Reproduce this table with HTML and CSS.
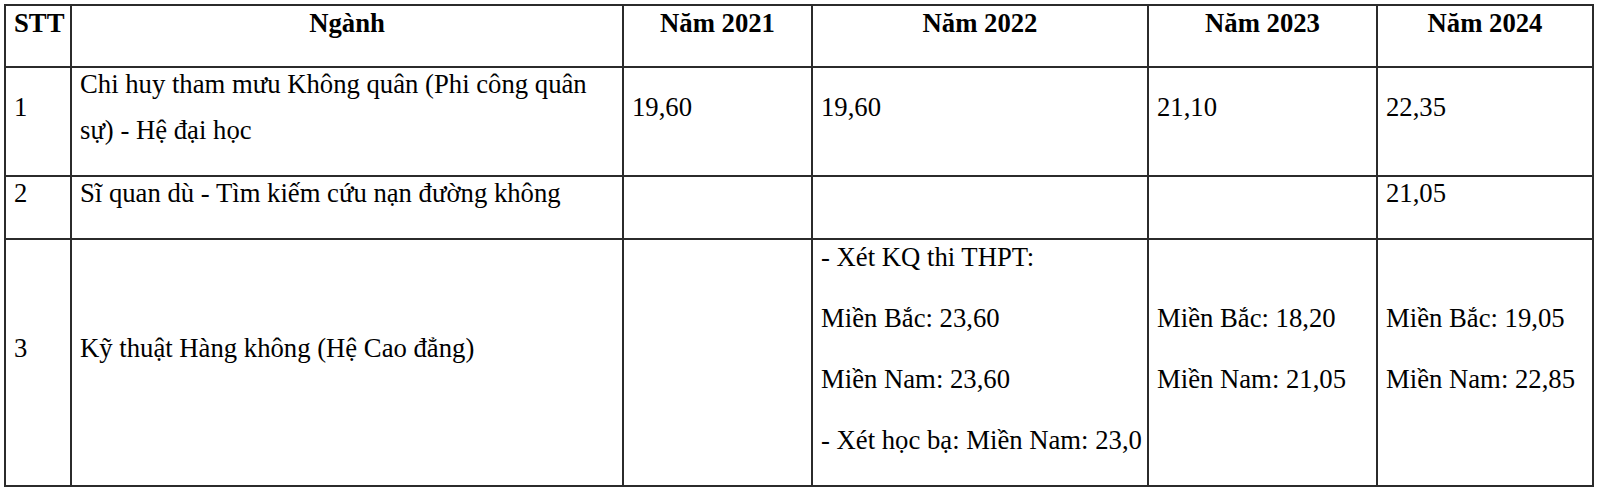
FILE: index.html
```html
<!DOCTYPE html>
<html lang="vi">
<head>
<meta charset="utf-8">
<title>Điểm chuẩn</title>
<link rel="stylesheet" href="styles.css">
</head>
<body>
<table class="scores">
  <colgroup>
    <col class="c-stt">
    <col class="c-name">
    <col class="c-y21">
    <col class="c-y22">
    <col class="c-y23">
    <col class="c-y24">
  </colgroup>
  <thead>
    <tr class="row-head">
      <th><p>STT</p></th>
      <th><p>Ngành</p></th>
      <th><p>Năm 2021</p></th>
      <th><p>Năm 2022</p></th>
      <th><p>Năm 2023</p></th>
      <th><p>Năm 2024</p></th>
    </tr>
  </thead>
  <tbody>
    <tr class="row-1">
      <td><p>1</p></td>
      <td><p>Chi huy tham mưu Không quân (Phi công quân<br>sự) - Hệ đại học</p></td>
      <td><p>19,60</p></td>
      <td><p>19,60</p></td>
      <td><p>21,10</p></td>
      <td><p>22,35</p></td>
    </tr>
    <tr class="row-2">
      <td><p>2</p></td>
      <td><p>Sĩ quan dù - Tìm kiếm cứu nạn đường không</p></td>
      <td></td>
      <td></td>
      <td></td>
      <td><p>21,05</p></td>
    </tr>
    <tr class="row-3">
      <td><p>3</p></td>
      <td><p>Kỹ thuật Hàng không (Hệ Cao đẳng)</p></td>
      <td></td>
      <td>
        <p>- Xét KQ thi THPT:</p>
        <p>Miền Bắc: 23,60</p>
        <p>Miền Nam: 23,60</p>
        <p>- Xét học bạ: Miền Nam: 23,0</p>
      </td>
      <td>
        <p>Miền Bắc: 18,20</p>
        <p>Miền Nam: 21,05</p>
      </td>
      <td>
        <p>Miền Bắc: 19,05</p>
        <p>Miền Nam: 22,85</p>
      </td>
    </tr>
  </tbody>
</table>
</body>
</html>
```

FILE: styles.css
```css
html, body {
  margin: 0;
  padding: 0;
  background: #ffffff;
}

body {
  padding: 4px 0 0 4px;
  font-family: "Liberation Serif", "Times New Roman", serif;
  font-size: 26.7px;
  color: #000000;
}

.scores {
  border-collapse: collapse;
  table-layout: fixed;
  width: 1590px;
  font-family: "Liberation Serif", "Times New Roman", serif;
  font-size: 26.7px;
}

.c-stt { width: 66px; }
.c-name { width: 552px; }
.c-y21 { width: 189px; }
.c-y22 { width: 336px; }
.c-y23 { width: 229px; }
.c-y24 { width: 216px; }

.scores th,
.scores td {
  border: 2px solid #2b2b2b;
  padding: 0 8px;
  vertical-align: middle;
  text-align: left;
  font-weight: normal;
}

.scores th {
  text-align: center;
  font-weight: bold;
}

.scores p {
  margin: -7px 0 22px;
  line-height: 46px;
  white-space: nowrap;
}

.scores th p {
  margin-bottom: 20px;
}

.row-head { height: 62px; }
.row-1 { height: 109px; }
.row-2 { height: 63px; }
.row-3 { height: 247px; }
```
